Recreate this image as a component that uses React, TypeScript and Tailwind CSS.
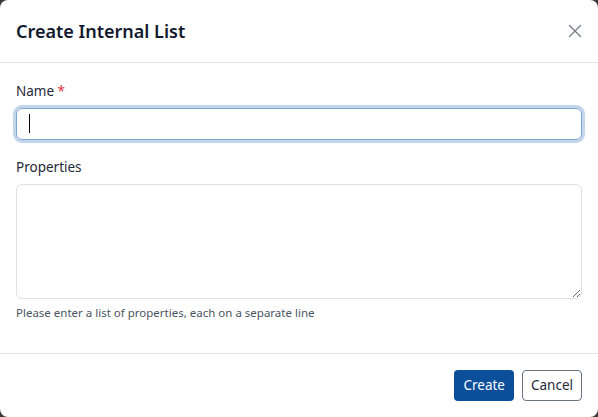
import { X } from 'lucide-react'

export default function App() {
  return (
    <div className="h-[417px] w-[598px] bg-[#3a3a3a]" style={{ fontFamily: '"Noto Sans", "Open Sans", sans-serif' }}>
      <div className="flex h-full flex-col rounded-lg bg-white">
        {/* Header */}
        <div className="flex h-[63px] items-center justify-between border-b border-[#e2e4e9] pl-4 pr-3">
          <h1 className="text-[18px] font-semibold text-[#111a2e]">Create Internal List</h1>
          <button className="text-[#7b808a]">
            <X size={22} strokeWidth={1.5} />
          </button>
        </div>

        {/* Body */}
        <div className="flex flex-1 flex-col px-4 pt-[18px]">
          <label className="mb-[7px] text-[13.5px] leading-[20px] text-[#1f2937]">
            Name <span className="text-[#e0303a]">*</span>
          </label>
          <div className="relative">
            <input className="h-[32px] w-full rounded-md border border-[#7ea4d3] px-3 text-[14px] outline-none ring-[3px] ring-[#c3d5ea]" />
            <span className="absolute left-[13px] top-[6px] h-[19px] w-px bg-black" />
          </div>

          <label className="mb-[7px] mt-[17px] text-[13.5px] leading-[20px] text-[#1f2937]">Properties</label>
          <textarea className="h-[115px] w-full rounded-md border border-[#dfe1e6] px-3 py-2 text-[14px] outline-none" />
          <p className="mt-[6px] text-[11.5px] leading-[16px] text-[#4b5563]">
            Please enter a list of properties, each on a separate line
          </p>
        </div>

        {/* Footer */}
        <div className="flex h-[64px] items-center justify-end gap-2 border-t border-[#e2e4e9] px-4">
          <button className="h-[31px] rounded bg-[#0b4e99] px-[9px] text-[13.5px] text-white">Create</button>
          <button className="h-[31px] rounded border border-[#6b7280] px-[8px] text-[13.5px] text-[#1f2937]">Cancel</button>
        </div>
      </div>
    </div>
  )
}
